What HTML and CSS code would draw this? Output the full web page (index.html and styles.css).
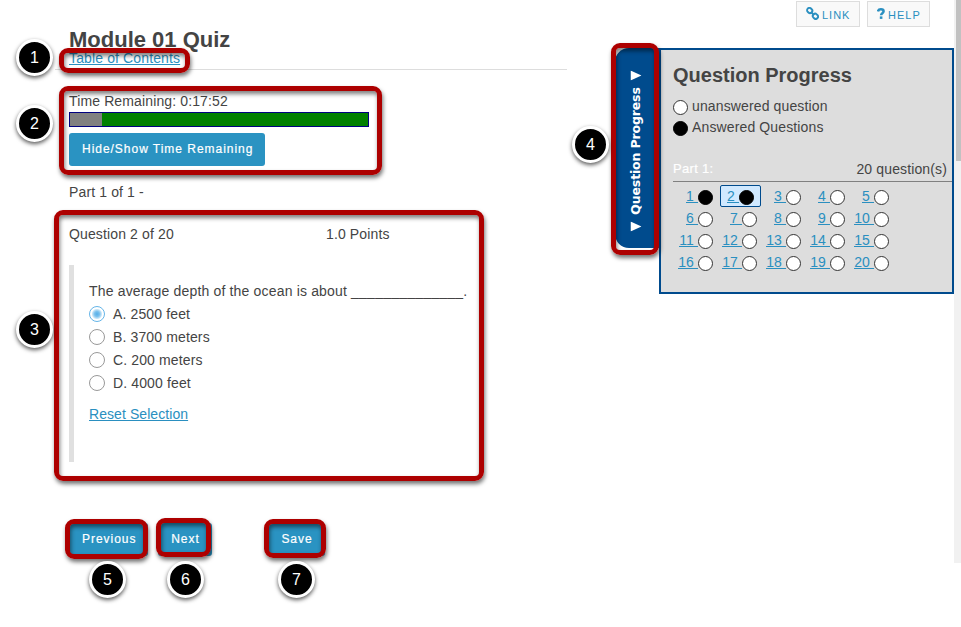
FILE: index.html
```html
<!DOCTYPE html>
<html lang="en">
<head>
<meta charset="utf-8">
<title>Module 01 Quiz</title>
<link rel="stylesheet" href="styles.css">
</head>
<body>
<div class="page">
  <main class="quiz">
    <header class="quiz-head">
      <h1>Module 01 Quiz</h1>
      <a class="toc" href="#">Table of Contents</a>
    </header>
    <section class="timer">
      <div class="time">Time Remaining: 0:17:52</div>
      <div class="bar"><div class="elapsed"></div></div>
      <button class="btn">Hide/Show Time Remaining</button>
    </section>
    <div class="part">Part 1 of 1 -</div>
    <section class="question">
      <div class="question-head"><span class="number">Question 2 of 20</span><span>1.0 Points</span></div>
      <div class="body">
        <p class="stem">The average depth of the ocean is about <span class="blank">______________</span>.</p>
        <div class="option"><i class="radio on"></i><span>A. 2500 feet</span></div>
        <div class="option"><i class="radio"></i><span>B. 3700 meters</span></div>
        <div class="option"><i class="radio"></i><span>C. 200 meters</span></div>
        <div class="option"><i class="radio"></i><span>D. 4000 feet</span></div>
        <a class="reset" href="#">Reset Selection</a>
      </div>
    </section>
    <div class="actions">
      <button class="btn previous">Previous</button>
      <button class="btn next">Next</button>
      <button class="btn save">Save</button>
    </div>
  </main>

  <div class="side">
    <div class="tools">
      <a class="tool" href="#"><svg class="icon" width="13" height="13" viewBox="0 0 13 13"><g fill="none" stroke="#2a8fc0" stroke-width="1.9"><rect x="1" y="1.2" width="5.4" height="4.6" rx="2.2" transform="rotate(45 3.7 3.5)"/><rect x="6.7" y="7" width="5.4" height="4.6" rx="2.2" transform="rotate(45 9.4 9.3)"/><path d="M5 5l3.2 3.2"/></g></svg>LINK</a>
      <a class="tool help" href="#"><svg class="icon" width="8" height="11" viewBox="0 0 8 11"><path d="M1 3.4C1.3 1.9 2.400 1.300 3.900 1.300c1.700 0 2.700.7 2.700 2 0 1.900-2.500 1.800-2.500 3.900" fill="none" stroke="#2a8fc0" stroke-width="2.500"/><path d="M2.800 8.400h2.600v2.500H2.800z" fill="#2a8fc0"/></svg>HELP</a>
    </div>
    <div class="progress">
      <div class="tab"><span class="tab-text"><svg width="10" height="11" viewBox="0 0 10 11"><path d="M0 0h10L5 11z" fill="#fff"/></svg><span>Question Progress</span><svg width="10" height="11" viewBox="0 0 10 11"><path d="M0 0h10L5 11z" fill="#fff"/></svg></span></div>
      <aside class="panel">
        <h2>Question Progress</h2>
        <div class="legend"><i class="dot"></i>unanswered question</div>
        <div class="legend"><i class="dot full"></i>Answered Questions</div>
        <div class="panel-part"><b>Part 1:</b><span>20 question(s)</span></div>
        <div class="grid">
          <a href="#"><u>1&nbsp;</u><i class="dot full"></i></a>
          <a href="#" class="current"><u>2&nbsp;</u><i class="dot full"></i></a>
          <a href="#"><u>3&nbsp;</u><i class="dot"></i></a>
          <a href="#"><u>4&nbsp;</u><i class="dot"></i></a>
          <a href="#"><u>5&nbsp;</u><i class="dot"></i></a>
          <a href="#"><u>6&nbsp;</u><i class="dot"></i></a>
          <a href="#"><u>7&nbsp;</u><i class="dot"></i></a>
          <a href="#"><u>8&nbsp;</u><i class="dot"></i></a>
          <a href="#"><u>9&nbsp;</u><i class="dot"></i></a>
          <a href="#"><u>10&nbsp;</u><i class="dot"></i></a>
          <a href="#"><u>11&nbsp;</u><i class="dot"></i></a>
          <a href="#"><u>12&nbsp;</u><i class="dot"></i></a>
          <a href="#"><u>13&nbsp;</u><i class="dot"></i></a>
          <a href="#"><u>14&nbsp;</u><i class="dot"></i></a>
          <a href="#"><u>15&nbsp;</u><i class="dot"></i></a>
          <a href="#"><u>16&nbsp;</u><i class="dot"></i></a>
          <a href="#"><u>17&nbsp;</u><i class="dot"></i></a>
          <a href="#"><u>18&nbsp;</u><i class="dot"></i></a>
          <a href="#"><u>19&nbsp;</u><i class="dot"></i></a>
          <a href="#"><u>20&nbsp;</u><i class="dot"></i></a>
        </div>
      </aside>
    </div>
  </div>
  <div class="scrollbar"><div class="thumb"></div></div>

  <div class="frame f1"></div>
  <div class="frame f2"></div>
  <div class="frame f3"></div>
  <div class="frame f4"></div>
  <div class="frame f5"></div>
  <div class="frame f6"></div>
  <div class="frame f7"></div>
  <div class="marker m1">1</div>
  <div class="marker m2">2</div>
  <div class="marker m3">3</div>
  <div class="marker m4">4</div>
  <div class="marker m5">5</div>
  <div class="marker m6">6</div>
  <div class="marker m7">7</div>
</div>
</body>
</html>
```
FILE: styles.css
```css
* { box-sizing: border-box; }
body {
  margin: 0;
  background: #fff;
  color: #444;
  font: 14px/16px "Liberation Sans", Arial, sans-serif;
  letter-spacing: 0.13px;
}
h1, h2, p { margin: 0; }
a { color: #2a8fc0; }
.page {
  position: relative;
  display: flex;
  width: 961px;
  height: 627px;
  overflow: hidden;
}

/* Quiz column */
.quiz { width: 615px; padding: 28px 48px 0 55px; }
.quiz-head {
  height: 42px;
  padding-left: 14px;
  border-bottom: 1px solid #ddd;
}
h1 { font-size: 22px; line-height: 24px; letter-spacing: 0; }
.toc { display: block; width: max-content; margin-top: -2px; }
.timer { padding: 23px 0 0 14px; }
.bar {
  width: 300px;
  height: 15px;
  margin: 3px 0 6px;
  border: 1px solid #000080;
  background: #008000;
}
.elapsed { width: 32px; height: 13px; background: #808080; }
.btn {
  display: block;
  height: 33px;
  padding: 0 12px 2px 13px;
  border: 0;
  border-radius: 3px;
  background: #2a93c2;
  color: #fff;
  font: 12px/16px "Liberation Sans", Arial, sans-serif;
  letter-spacing: 0.97px;
  white-space: nowrap;
  -webkit-text-stroke: 0.2px #fff;
}
.timer .btn { width: 196px; }
.part { padding: 18px 0 0 14px; }
.question { padding: 26px 0 0 14px; }
.question-head { display: flex; }
.number { width: 257px; }
.body {
  height: 197px;
  margin-top: 23px;
  padding: 18px 0 0 15px;
  border-left: 5px solid #e0e0e0;
}
.stem { margin-bottom: 7px; letter-spacing: 0.17px; white-space: nowrap; }
.blank { letter-spacing: 0.22px; }
.option { display: flex; align-items: center; height: 16px; margin-bottom: 7px; }
.radio {
  width: 16px;
  height: 16px;
  margin-right: 8px;
  border: 1px solid #999;
  border-radius: 50%;
  background: #fff;
}
.radio.on {
  border-color: #65b5e8;
  background: radial-gradient(circle, #55afe8 0, #79c0ed 2.5px, #c5e4f7 4.5px, #fff 5.5px);
}
.reset { display: block; width: max-content; margin-top: 15px; letter-spacing: 0.07px; }
.actions { display: flex; padding: 61px 0 0 14px; }
.previous { width: 79px; margin-right: 10px; }
.next { width: 54px; margin-right: 56px; }
.save { width: 57px; }

/* Side column */
.side { width: 339px; }
.tools { display: flex; gap: 7px; height: 48px; padding: 1px 0 0 181px; }
.tool {
  display: flex;
  align-items: center;
  width: 64px;
  height: 26px;
  padding: 2px 0 0 9px;
  border: 1px solid #ddd;
  background: #f9f9f9;
  font-size: 11px;
  letter-spacing: 1px;
  text-decoration: none;
}
.tool.help { width: 63px; }
.icon { flex: none; margin: -3px 3px 0 0; }
.progress { display: flex; }
.tab {
  display: flex;
  align-items: center;
  justify-content: center;
  width: 44px;
  height: 200px;
  border-radius: 14px 0 0 14px;
  background: #004b8d;
}
.tab-text {
  display: flex;
  align-items: center;
  justify-content: space-between;
  flex: none;
  width: 161px;
  transform: rotate(-90deg) translate(-3px, -2px);
  color: #fff;
  font: bold 12.5px/16px "DejaVu Sans", sans-serif;
  letter-spacing: -0.15px;
  white-space: nowrap;
}
.tab-text svg { flex: none; }
.panel {
  width: 295px;
  height: 246px;
  padding: 13px 0 0 12px;
  border: 2px solid #004b8d;
  background: #ddd;
}
h2 { margin-bottom: 11px; font-size: 20px; line-height: 24px; letter-spacing: 0; }
.legend { display: flex; height: 21px; }
.dot {
  flex: none;
  width: 15px;
  height: 15px;
  border: 1px solid #333;
  border-radius: 50%;
  background: #fff;
}
.dot.full { border-color: #000; background: #000; }
.legend .dot { margin: 2px 4px 0 0; }
.panel-part {
  display: flex;
  justify-content: space-between;
  height: 21px;
  margin-top: 21px;
  padding-right: 5px;
  border-bottom: 1px solid #808080;
}
.panel-part b {
  color: #fff;
  font-size: 13px;
  font-weight: normal;
  letter-spacing: 0.3px;
  -webkit-text-stroke: 0.2px #fff;
}
.grid {
  display: grid;
  grid-template-columns: repeat(5, 44px);
  grid-auto-rows: 22px;
  margin-top: 3px;
}
.grid a {
  display: flex;
  justify-content: flex-end;
  padding: 3px 4px 0 0;
}
.grid .dot { margin-top: 2px; }
.grid .current {
  width: 41px;
  margin-left: 3px;
  padding: 2px 6px 0 0;
  border: 1px solid #004b8d;
  border-radius: 2px;
  background: #d0e9ff;
}

.scrollbar { width: 7px; height: 563px; padding-left: 2px; background: #f1f1f1; }
.thumb { height: 161px; background: #c1c1c1; }

/* Callouts laid over the page */
.frame {
  position: absolute;
  border: 5px solid #ad0000;
  border-radius: 9px;
  box-shadow: 1px 3px 4px rgba(0, 0, 0, .55), inset 1px 3px 4px rgba(0, 0, 0, .5);
}
.f1 { left: 59px; top: 48px; width: 131px; height: 25px; }
.f2 { left: 59px; top: 86px; width: 323px; height: 89px; }
.f3 { left: 54px; top: 210px; width: 430px; height: 271px; }
.f4 { left: 611px; top: 43px; width: 48px; height: 212px; }
.f5 { left: 65px; top: 519px; width: 83px; height: 40px; }
.f6 { left: 156px; top: 518px; width: 55px; height: 39px; }
.f7 { left: 264px; top: 519px; width: 62px; height: 39px; }
.marker {
  position: absolute;
  width: 37px;
  height: 37px;
  border: 3px solid #fff;
  border-radius: 50%;
  background: #000;
  box-shadow: 0 2px 4px rgba(0, 0, 0, .65);
  color: #fff;
  font-size: 16px;
  line-height: 32px;
  letter-spacing: 0;
  text-align: center;
}
.m1 { left: 16px; top: 39px; }
.m2 { left: 16px; top: 105px; }
.m3 { left: 16px; top: 311px; }
.m4 { left: 572px; top: 126px; }
.m5 { left: 89px; top: 561px; }
.m6 { left: 167px; top: 561px; }
.m7 { left: 278px; top: 561px; }
```
